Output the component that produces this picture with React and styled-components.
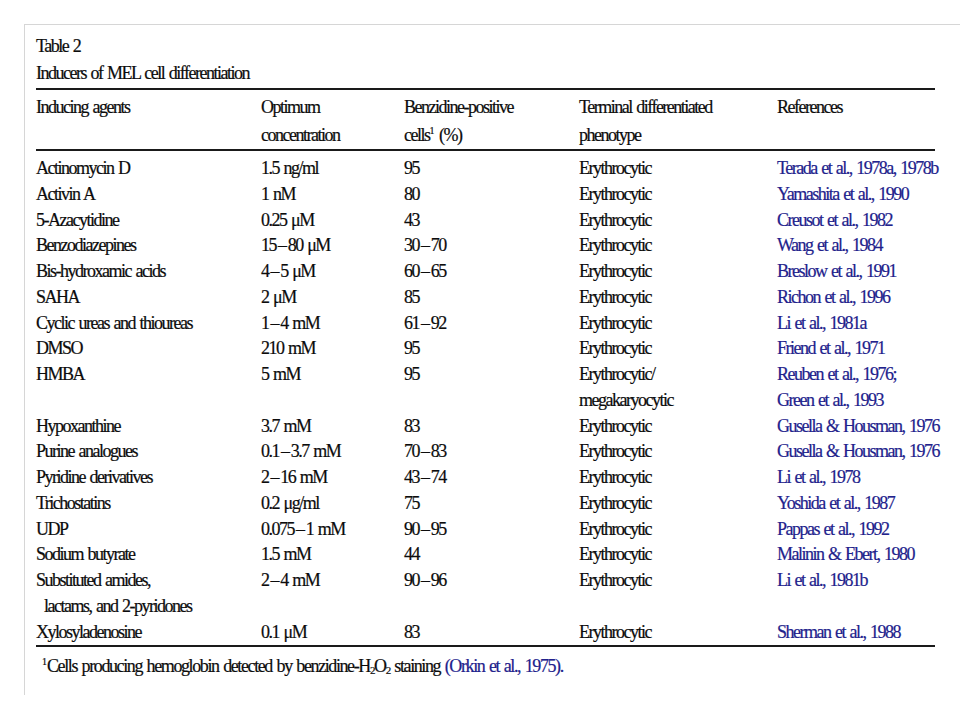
import React from 'react';
import styled, { createGlobalStyle } from 'styled-components';

const GlobalStyle = createGlobalStyle`
  html, body {
    margin: 0;
    padding: 0;
    background: #fff;
  }
  body {
    font-family: "Liberation Serif", "Times New Roman", serif;
    color: #0c0c0c;
    -webkit-text-stroke: 0.2px;
  }
`;

// page frame: light grey rule on top and left
const Frame = styled.div`
  margin: 24px 0 0 24px;
  height: 671px;
  border-top: 1px solid #d6d6d6;
  border-left: 1px solid #d6d6d6;
  padding: 8px 0 0 11px;
  box-sizing: border-box;
`;

const Caption = styled.div`
  font-size: 18px;
  line-height: 27px;
  letter-spacing: -1.5px;
  word-spacing: 1.5px;
`;

const Table = styled.div`
  width: 899px;
  margin-top: 1px;
  border-top: 2px solid #1a1a1a;
  border-bottom: 2px solid #1a1a1a;
  font-size: 18px;
  letter-spacing: -1.5px;
  word-spacing: 1.5px;
`;

const Head = styled.div`
  border-bottom: 2px solid #1a1a1a;
  padding: 4px 0 0;
`;

const Body = styled.div`
  padding-top: 5px;
`;

const Row = styled.div`
  display: grid;
  grid-template-columns: 225px 143px 175px 198px 1fr;
  line-height: ${(p) => (p.$head ? '27.5px' : '25.75px')};
`;

const Cell = styled.div`
  white-space: nowrap;
  color: ${(p) => (p.$link ? '#22228c' : 'inherit')};
`;

const Line = styled.div`
  padding-left: ${(p) => (p.$indent ? '8px' : '0')};
`;

const Sup = styled.sup`
  font-size: 10px;
  line-height: 0;
  vertical-align: 7px;
  letter-spacing: 0;
`;

const Sub = styled.sub`
  font-size: 11px;
  line-height: 0;
  vertical-align: -2px;
`;

const Footnote = styled.div`
  margin-top: 6px;
  padding-left: 6px;
  font-size: 18px;
  line-height: 27px;
  letter-spacing: -1.4px;
  word-spacing: 1.5px;
`;

const Ref = styled.span`
  color: #22228c;
`;

const d = '\u2009\u2013\u2009';

const rows = [
  ['Actinomycin D', '1.5 ng/ml', '95', 'Erythrocytic', 'Terada et al., 1978a, 1978b'],
  ['Activin A', '1 nM', '80', 'Erythrocytic', 'Yamashita et al., 1990'],
  ['5-Azacytidine', '0.25 μM', '43', 'Erythrocytic', 'Creusot et al., 1982'],
  ['Benzodiazepines', `15${d}80 μM`, `30${d}70`, 'Erythrocytic', 'Wang et al., 1984'],
  ['Bis-hydroxamic acids', `4${d}5 μM`, `60${d}65`, 'Erythrocytic', 'Breslow et al., 1991'],
  ['SAHA', '2 μM', '85', 'Erythrocytic', 'Richon et al., 1996'],
  ['Cyclic ureas and thioureas', `1${d}4 mM`, `61${d}92`, 'Erythrocytic', 'Li et al., 1981a'],
  ['DMSO', '210 mM', '95', 'Erythrocytic', 'Friend et al., 1971'],
  ['HMBA', '5 mM', '95', ['Erythrocytic/', 'megakaryocytic'], ['Reuben et al., 1976;', 'Green et al., 1993']],
  ['Hypoxanthine', '3.7 mM', '83', 'Erythrocytic', 'Gusella & Housman, 1976'],
  ['Purine analogues', `0.1${d}3.7 mM`, `70${d}83`, 'Erythrocytic', 'Gusella & Housman, 1976'],
  ['Pyridine derivatives', `2${d}16 mM`, `43${d}74`, 'Erythrocytic', 'Li et al., 1978'],
  ['Trichostatins', '0.2 μg/ml', '75', 'Erythrocytic', 'Yoshida et al., 1987'],
  ['UDP', `0.075${d}1 mM`, `90${d}95`, 'Erythrocytic', 'Pappas et al., 1992'],
  ['Sodium butyrate', '1.5 mM', '44', 'Erythrocytic', 'Malinin & Ebert, 1980'],
  [['Substituted amides,', 'lactams, and 2-pyridones'], `2${d}4 mM`, `90${d}96`, 'Erythrocytic', 'Li et al., 1981b'],
  ['Xylosyladenosine', '0.1 μM', '83', 'Erythrocytic', 'Sherman et al., 1988'],
];

// multi-line cells; `hang` indents the continuation lines
const lines = (v, hang) =>
  Array.isArray(v)
    ? v.map((t, i) => (
        <Line key={i} $indent={hang && i > 0}>
          {t}
        </Line>
      ))
    : v;

export default function App() {
  return (
    <>
      <GlobalStyle />
      <Frame>
        <Caption>
          <div>Table 2</div>
          <div>Inducers of MEL cell differentiation</div>
        </Caption>
        <Table>
          <Head>
            <Row $head>
              <Cell>Inducing agents</Cell>
              <Cell>Optimum<br />concentration</Cell>
              <Cell>Benzidine-positive<br />cells<Sup>1</Sup> (%)</Cell>
              <Cell>Terminal differentiated<br />phenotype</Cell>
              <Cell>References</Cell>
            </Row>
          </Head>
          <Body>
            {rows.map((r, i) => (
              <Row key={i}>
                <Cell>{lines(r[0], true)}</Cell>
                <Cell>{r[1]}</Cell>
                <Cell>{r[2]}</Cell>
                <Cell>{lines(r[3])}</Cell>
                <Cell $link>{lines(r[4])}</Cell>
              </Row>
            ))}
          </Body>
        </Table>
        <Footnote>
          <Sup>1</Sup>Cells producing hemoglobin detected by benzidine-H<Sub>2</Sub>O<Sub>2</Sub> staining{' '}
          <Ref>(Orkin et al., 1975).</Ref>
        </Footnote>
      </Frame>
    </>
  );
}
